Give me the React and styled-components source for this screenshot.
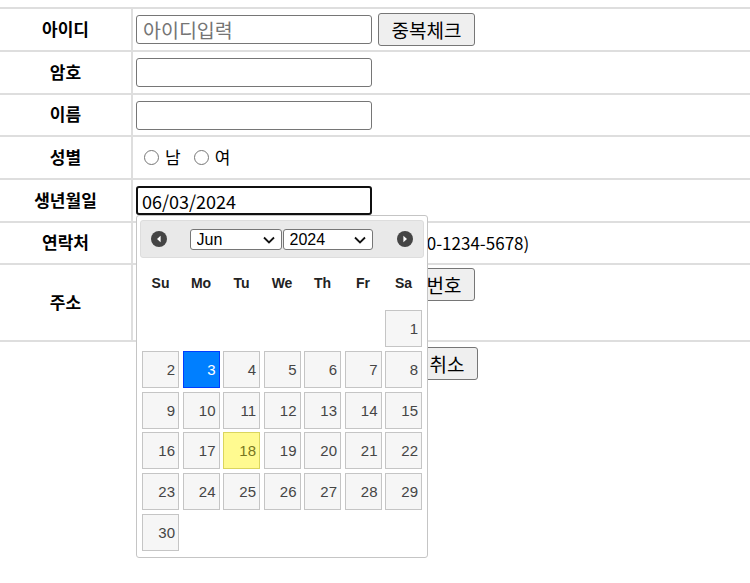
import styled, { createGlobalStyle } from "styled-components";

const GlobalStyle = createGlobalStyle`
  body {
    margin: 0;
    background: #fff;
    color: #000;
    font-family: "Noto Sans CJK KR", "Noto Sans", sans-serif;
  }
  * { box-sizing: border-box; }
`;

const DAYS = ["Su", "Mo", "Tu", "We", "Th", "Fr", "Sa"];

const PrevIcon = () => (
  <svg width="16" height="16" viewBox="0 0 16 16">
    <circle cx="8" cy="8" r="8" fill="#454545" />
    <path d="M9.6 4.8 L6 8 L9.6 11.2 Z" fill="#fff" />
  </svg>
);

const NextIcon = () => (
  <svg width="16" height="16" viewBox="0 0 16 16">
    <circle cx="8" cy="8" r="8" fill="#454545" />
    <path d="M6.4 4.8 L10 8 L6.4 11.2 Z" fill="#fff" />
  </svg>
);

const Chevron = () => (
  <svg width="12" height="8" viewBox="0 0 12 8">
    <path d="M1 1.5 L6 6.5 L11 1.5" stroke="#111" strokeWidth="1.8" fill="none" />
  </svg>
);

const App = () => {
  const cells = [];
  for (let i = 0; i < 6; i++) cells.push(<Blank key={"b" + i} />);
  for (let d = 1; d <= 30; d++) {
    const state = d === 3 ? "active" : d === 18 ? "today" : undefined;
    cells.push(
      <DayCell key={d} $state={state}>
        {d}
      </DayCell>
    );
  }

  return (
    <Page>
      <GlobalStyle />
      <Form>
        <Row $h={43}>
          <Label>아이디</Label>
          <Field>
            <TextInput placeholder="아이디입력" />
            <Button>중복체크</Button>
          </Field>
        </Row>
        <Row $h={43}>
          <Label>암호</Label>
          <Field>
            <TextInput type="password" />
          </Field>
        </Row>
        <Row $h={42}>
          <Label>이름</Label>
          <Field>
            <TextInput />
          </Field>
        </Row>
        <Row $h={43}>
          <Label>성별</Label>
          <Field>
            <RadioGroup>
              <RadioLabel>
                <Radio type="radio" name="gender" />남
              </RadioLabel>
              <RadioLabel>
                <Radio type="radio" name="gender" />여
              </RadioLabel>
            </RadioGroup>
          </Field>
        </Row>
        <Row $h={43}>
          <Label>생년월일</Label>
          <Field>
            <DateWrap>
              <DateInput defaultValue="06/03/2024" readOnly />
              <Picker>
                <PickerHeader>
                  <PrevIcon />
                  <Selects>
                    <SelectBox $w={92}>
                      <Select defaultValue="Jun">
                        <option>Jun</option>
                      </Select>
                      <ChevronSpot>
                        <Chevron />
                      </ChevronSpot>
                    </SelectBox>
                    <SelectBox $w={90}>
                      <Select defaultValue="2024">
                        <option>2024</option>
                      </Select>
                      <ChevronSpot>
                        <Chevron />
                      </ChevronSpot>
                    </SelectBox>
                  </Selects>
                  <NextIcon />
                </PickerHeader>
                <DayNames>
                  {DAYS.map((d) => (
                    <DayName key={d}>{d}</DayName>
                  ))}
                </DayNames>
                <DayGrid>{cells}</DayGrid>
              </Picker>
            </DateWrap>
          </Field>
        </Row>
        <Row $h={42}>
          <Label>연락처</Label>
          <Field>
            <TextInput />
            <Hint>(예: 010-1234-5678)</Hint>
          </Field>
        </Row>
        <Row $h={77}>
          <Label>주소</Label>
          <AddressField>
            <Line>
              <TextInput $w={236} />
              <Button>우편번호</Button>
            </Line>
            <TextInput $w={236} />
          </AddressField>
        </Row>
      </Form>
      <ButtonBar>
        <Button>회원가입</Button>
        <Button>취소</Button>
      </ButtonBar>
    </Page>
  );
};

const Page = styled.div`
  padding-top: 7px;
  width: 100%;
  min-height: 583px;
`;

const Form = styled.div`
  border-top: 2px solid #dedede;
  width: 100%;
`;

const Row = styled.div`
  display: grid;
  grid-template-columns: 133px 1fr;
  height: ${(p) => p.$h}px;
  border-bottom: 2px solid #dedede;
`;

const Label = styled.div`
  display: flex;
  align-items: center;
  justify-content: center;
  border-right: 2px solid #dedede;
  font-size: 17px;
  font-weight: 700;
  line-height: 1.2;
  padding-bottom: 1px;
`;

const Field = styled.div`
  display: flex;
  align-items: center;
  gap: 6px;
  padding-left: 3px;
  font-size: 16px;
`;

const AddressField = styled.div`
  display: flex;
  flex-direction: column;
  align-items: flex-start;
  gap: 6px;
  padding: 3px 0 0 3px;
`;

const Line = styled.div`
  display: flex;
  align-items: center;
  gap: 6px;
`;

const TextInput = styled.input`
  width: ${(p) => p.$w || 236}px;
  height: 29px;
  border: 1px solid #767676;
  border-radius: 3px;
  padding: 1px 6px;
  font-family: "Noto Sans CJK KR", sans-serif;
  font-size: 19.5px;
  color: #000;
  &::placeholder {
    color: #757575;
  }
`;

const Button = styled.button`
  height: 33px;
  padding: 0 12.5px;
  border: 1px solid #767676;
  border-radius: 3px;
  background: #efefef;
  font-family: "Noto Sans CJK KR", sans-serif;
  font-size: 19px;
  line-height: 1;
  color: #000;
`;

const RadioGroup = styled.div`
  display: flex;
  align-items: center;
  gap: 13px;
  padding-left: 8px;
`;

const RadioLabel = styled.label`
  display: flex;
  align-items: center;
  gap: 6px;
  font-size: 17px;
  line-height: 1.2;
`;

const Radio = styled.input`
  width: 15px;
  height: 15px;
  margin: 0;
`;

const Hint = styled.span`
  font-size: 17px;
  margin-left: 0;
  padding-bottom: 2px;
`;

const DateWrap = styled.div`
  position: relative;
`;

const DateInput = styled.input`
  display: block;
  width: 236px;
  height: 29px;
  border: 2px solid #101010;
  border-radius: 3px;
  padding: 0 4px;
  font-family: "Noto Sans CJK KR", sans-serif;
  font-size: 18px;
  color: #000;
  outline: none;
`;

const Picker = styled.div`
  position: absolute;
  top: 100%;
  left: 0;
  z-index: 10;
  width: 292px;
  height: 343px;
  padding: 4px 3px 0;
  background: #fff;
  border: 1px solid #c5c5c5;
  border-radius: 3px;
  font-family: "Liberation Sans", Arial, sans-serif;
`;

const PickerHeader = styled.div`
  display: flex;
  align-items: center;
  justify-content: space-between;
  height: 38px;
  padding: 0 10px;
  background: #e9e9e9;
  border: 1px solid #dddddd;
  border-radius: 3px;
  svg {
    display: block;
  }
`;

const Selects = styled.div`
  display: flex;
  gap: 1px;
  margin-left: -2px;
`;

const SelectBox = styled.div`
  position: relative;
  width: ${(p) => p.$w}px;
`;

const Select = styled.select`
  appearance: none;
  width: 100%;
  height: 21px;
  padding: 0 0 0 6px;
  border: 1px solid #767676;
  border-radius: 3px;
  background: #fff;
  font-family: "Liberation Sans", Arial, sans-serif;
  font-size: 16px;
  line-height: 19px;
  color: #000;
`;

const ChevronSpot = styled.span`
  position: absolute;
  right: 7px;
  top: 7px;
  pointer-events: none;
  svg {
    display: block;
  }
`;

const DayNames = styled.div`
  display: grid;
  grid-template-columns: repeat(7, 1fr);
  column-gap: 3.5px;
  height: 34px;
  margin: 8px 2px 10px;
`;

const DayName = styled.div`
  display: flex;
  align-items: center;
  justify-content: center;
  font-size: 14px;
  font-weight: 700;
  color: #222;
`;

const DayGrid = styled.div`
  display: grid;
  grid-template-columns: repeat(7, 1fr);
  grid-auto-rows: 37px;
  column-gap: 3.5px;
  row-gap: 3.8px;
  margin: 0 2px;
`;

const Blank = styled.div``;

const DayCell = styled.div`
  display: flex;
  align-items: center;
  justify-content: flex-end;
  padding-right: 3px;
  font-size: 15px;
  border: 1px solid
    ${(p) =>
      p.$state === "active" ? "#003eff" : p.$state === "today" ? "#dad55e" : "#c5c5c5"};
  background: ${(p) =>
    p.$state === "active" ? "#007fff" : p.$state === "today" ? "#fffa90" : "#f6f6f6"};
  color: ${(p) =>
    p.$state === "active" ? "#fff" : p.$state === "today" ? "#777620" : "#454545"};
`;

const ButtonBar = styled.div`
  display: flex;
  gap: 4px;
  padding: 5px 0 0 315px;
`;

export default App;
